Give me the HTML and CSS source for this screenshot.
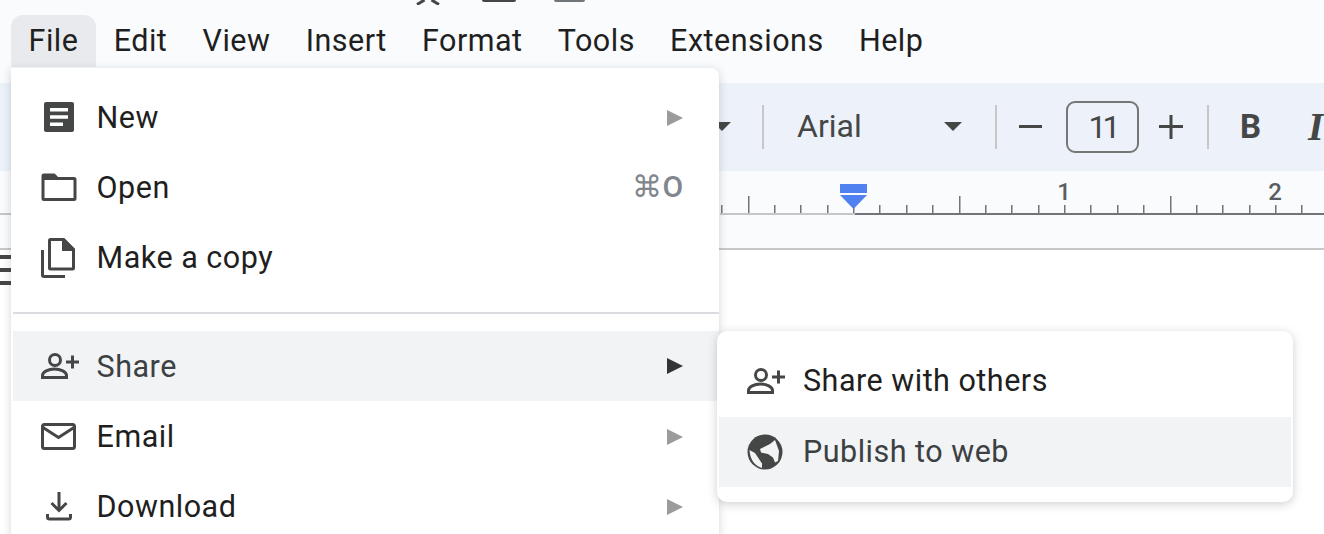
FILE: index.html
```html
<!DOCTYPE html>
<html lang="en">
<head>
<meta charset="utf-8">
<title>File menu</title>
<link rel="stylesheet" href="styles.css">
</head>
<body>
<div class="page">
  <div class="title-icons">
    <svg class="ti star" width="24" height="5" viewBox="0 0 24 5"><path d="M1 4.500L8.500 0M23 4.500L15.500 0" fill="none" stroke="#444746" stroke-width="3"/></svg>
    <span class="ti-box one"></span>
    <span class="ti-box two"></span>
  </div>
  <nav class="menubar">
    <span class="mb-item active">File</span><span class="mb-item">Edit</span><span class="mb-item">View</span><span class="mb-item">Insert</span><span class="mb-item">Format</span><span class="mb-item">Tools</span><span class="mb-item">Extensions</span><span class="mb-item">Help</span>
  </nav>
  <div class="toolbar">
    <span class="caret first"></span>
    <span class="sep s1"></span>
    <span class="font-name">Arial</span>
    <span class="caret second"></span>
    <span class="sep s2"></span>
    <svg class="tool minus" width="24" height="24" viewBox="0 0 24 24"><rect x="0" y="10" width="23" height="3" fill="#444746"/></svg>
    <span class="size-box">11</span>
    <svg class="tool plus" width="24" height="24" viewBox="0 0 24 24"><path d="M0 11.500h24M12 0v24" stroke="#444746" stroke-width="3"/></svg>
    <span class="sep s3"></span>
    <span class="bold">B</span>
    <span class="italic">I</span>
  </div>
  <div class="ruler-band">
    <svg class="ruler" width="1324" height="50" viewBox="0 0 1324 50" id="ruler"></svg>
  </div>
  <div class="doc">
    <div class="side-lines"><span></span><span></span><span></span></div>
  </div>

  <div class="file-menu">
    <div class="row"><svg class="ico" viewBox="0 0 36 36"><path fill="#444746" d="M5 3h26a2 2 0 0 1 2 2v26a2 2 0 0 1-2 2H5a2 2 0 0 1-2-2V5a2 2 0 0 1 2-2z"/><path fill="#fff" d="M9 9h18v3.500H9zM9 16.300h18v3.500H9zM9 23.500h13V27H9z"/></svg><span class="label">New</span><span class="arrow"></span></div>
    <div class="row"><svg class="ico" viewBox="0 0 36 36"><path fill="none" stroke="#444746" stroke-width="3" d="M2 7a1 1 0 0 1 1-1h10l3.500 3.500h16.500a1 1 0 0 1 1 1v19a1 1 0 0 1-1 1H3a1 1 0 0 1-1-1z"/><path fill="#444746" d="M1 5h12.500l4 4.500v1.500H1z"/></svg><span class="label">Open</span><span class="shortcut">⌘O</span></div>
    <div class="row"><svg class="ico" viewBox="0 0 36 36"><path fill="none" stroke="#444746" stroke-width="3" d="M1.500 11v25a1.500 1.500 0 0 0 1.500 1.500H24"/><path fill="none" stroke="#444746" stroke-width="3" d="M9.500 .5h13l10 10v18.500a1 1 0 0 1-1 1H9.500a1 1 0 0 1-1-1V1.500a1 1 0 0 1 1-1z"/><path fill="#444746" d="M21 -1h2l11 11v2H21z"/></svg><span class="label">Make a copy</span></div>
    <div class="divider"></div>
    <div class="row hover"><svg class="ico" viewBox="0 0 36 36"><circle cx="14" cy="12" r="5.500" fill="none" stroke="#444746" stroke-width="3"/><path fill="none" stroke="#444746" stroke-width="3" d="M1.500 29.500v-2c0-3.500 6-6.500 12-6.500s12 3 12 6.500v2z"/><path stroke="#444746" stroke-width="3" d="M25 14h13M31.500 7.500v13"/></svg><span class="label">Share</span><span class="arrow dark"></span></div>
    <div class="row"><svg class="ico" viewBox="0 0 36 36"><rect x="1.500" y="6.500" width="32" height="24" rx="2" fill="none" stroke="#444746" stroke-width="3"/><path fill="none" stroke="#444746" stroke-width="3" d="M2 9.500l15.500 10L33 9.500"/></svg><span class="label">Email</span><span class="arrow"></span></div>
    <div class="row"><svg class="ico" viewBox="0 0 36 36"><path fill="none" stroke="#444746" stroke-width="3" d="M18 4v18M10.500 15l7.500 7.500 7.500-7.500"/><path fill="none" stroke="#444746" stroke-width="3" d="M6.500 26v3a2 2 0 0 0 2 2h19a2 2 0 0 0 2-2v-3"/></svg><span class="label">Download</span><span class="arrow"></span></div>
  </div>

  <div class="sub-menu">
    <div class="row sub first"><svg class="ico" viewBox="0 0 36 36"><circle cx="14" cy="11" r="5.500" fill="none" stroke="#444746" stroke-width="3"/><path fill="none" stroke="#444746" stroke-width="3" d="M1.500 28.500v-2c0-3.500 6-6.500 12-6.500s12 3 12 6.500v2z"/><path stroke="#444746" stroke-width="3" d="M25 13h13M31.500 6.500v13"/></svg><span class="label">Share with others</span></div>
    <div class="row sub hover"><svg class="ico" viewBox="0 0 36 36"><circle cx="18" cy="18" r="17.500" fill="#444746"/><path fill="#f1f3f4" d="M13 15l10-5 5-4 4 11-1 10-3 1.500-2-5-5-3.500-7-1.500zM2.500 16L8 19l7 10.500V34C8 32 3 26 2.500 16z"/></svg><span class="label">Publish to web</span></div>
  </div>
</div>
<script src="ruler.js"></script>
</body>
</html>
```

FILE: ruler.js
```js
var svg = document.getElementById('ruler');
var out = '';
var origin = 853, inch = 211;
for (var i = -1; i < 3; i++) {
  for (var j = 0; j < 8; j++) {
    var x = Math.round(origin + (i + j / 8) * inch);
    if (x < 720 || x > 1324) continue;
    var h = j === 4 ? 18 : 9;
    out += '<rect x="' + x + '" y="' + (43 - h) + '" width="1.500" height="' + h + '" fill="#70757a"/>';
  }
}
out += '<rect x="0" y="42" width="11" height="2" fill="#c4c7c5"/>';
out += '<rect x="720" y="42" width="135" height="2" fill="#c4c7c5"/>';
out += '<rect x="855" y="42" width="469" height="2" fill="#70757a"/>';
out += '<rect x="840" y="13" width="27" height="9" fill="#4f81f0"/>';
out += '<path d="M840 24h27l-13.500 14z" fill="#4f81f0"/>';
out += '<text x="1064" y="29" class="ruler-num">1</text><text x="1275" y="29" class="ruler-num">2</text>';
svg.innerHTML = out;
```

FILE: styles.css
```css
* { box-sizing: border-box; }
html, body { margin: 0; padding: 0; height: 100%; overflow: hidden; }
body { background: #fff; font-family: Roboto, "Liberation Sans", sans-serif; color: #1f1f1f; }
.page { position: relative; width: 1324px; height: 534px; overflow: hidden; background: #fff; }

.title-icons { position: absolute; left: 0; top: 0; width: 100%; height: 6px; z-index: 1; }
.ti { position: absolute; top: 0; }
.star { left: 416px; }
.ti-box { position: absolute; top: 0; background: #444746; border-radius: 0 0 3px 3px; }
.ti-box.one { left: 482px; width: 34px; height: 2px; }
.ti-box.two { left: 554px; width: 31px; height: 2px; background: #70757a; }

.menubar { height: 83px; padding: 15px 0 0 11px; background: #f9fbfd; display: flex; }
.mb-item { height: 52px; line-height: 52px; padding: 0 17.600px; font-size: 30.500px; letter-spacing: 0.5px; color: #1f1f1f; }
.mb-item.active { background: #e9eaed; border-radius: 12px 12px 0 0; }

.toolbar { position: relative; height: 88px; background: #edf2fa; color: #444746; overflow: hidden; }
.caret { position: absolute; top: 39px; width: 0; height: 0; border-left: 9px solid transparent; border-right: 9px solid transparent; border-top: 9px solid #444746; }
.caret.first { left: 713px; }
.caret.second { left: 944px; }
.sep { position: absolute; top: 22px; width: 2px; height: 44px; background: #c7c7c7; }
.s1 { left: 762px; } .s2 { left: 995px; } .s3 { left: 1207px; }
.font-name { position: absolute; left: 797px; top: 24px; font-size: 32px; line-height: 38px; }
.tool { position: absolute; top: 32px; }
.minus { left: 1019px; }
.plus { left: 1159px; }
.size-box { position: absolute; left: 1066px; top: 18px; width: 73px; height: 52px; border: 2px solid #747775; border-radius: 9px; text-align: center; font-size: 32px; line-height: 48px; letter-spacing: -4px; }
.bold { position: absolute; left: 1240px; top: 24px; font-size: 33px; line-height: 40px; font-weight: 700; }
.italic { position: absolute; left: 1308px; top: 21px; font-size: 40px; line-height: 46px; font-weight: 700; font-style: italic; font-family: "Liberation Serif", serif; }

.ruler-band { height: 79px; background: #f9fbfd; border-bottom: 2px solid #c7c7c7; }
.ruler { display: block; }
.ruler-num { font-family: Roboto, sans-serif; font-size: 24px; fill: #5a5e62; text-anchor: middle; font-weight: 500; }
.doc { height: 284px; background: #fff; }
.side-lines { display: flex; flex-direction: column; gap: 9px; width: 11px; padding-top: 5px; }
.side-lines span { height: 4px; background: #444746; }

.file-menu { position: absolute; left: 11px; top: 68px; width: 708px; height: 490px; padding: 14px 0 0 2px; background: #fff; border-radius: 0 8px 8px 8px; box-shadow: 0 2px 10px rgba(60,64,67,.22); }
.row { display: flex; align-items: center; height: 70px; padding-left: 28px; position: relative; font-size: 30.500px; letter-spacing: 0.5px; color: #1f1f1f; }
.row.hover { background: #f1f3f4; color: #3c4043; }
.ico { width: 36px; height: 36px; flex: none; margin-right: 19.600px; overflow: visible; }
.arrow { position: absolute; left: 654px; top: 28px; width: 0; height: 0; border-left: 16px solid #9a9b9c; border-top: 8px solid transparent; border-bottom: 8px solid transparent; }
.arrow.dark { border-left-color: #333; top: 27px; }
.shortcut { position: absolute; left: 619px; top: 15px; font-size: 30px; line-height: 40px; letter-spacing: 0.5px; color: #80868b; font-weight: 500; }
.divider { height: 2px; margin: 20px 0 17px; background: #dadce0; }

.sub-menu { position: absolute; left: 717px; top: 331px; width: 576px; height: 171px; padding: 16px 2px 0; background: #fff; border-radius: 10px; box-shadow: 0 2px 10px rgba(60,64,67,.25); }
.row.sub .ico { margin-right: 20px; }
.row.sub .label { padding-bottom: 1px; }
.row.first .label { padding-bottom: 3px; }
```
